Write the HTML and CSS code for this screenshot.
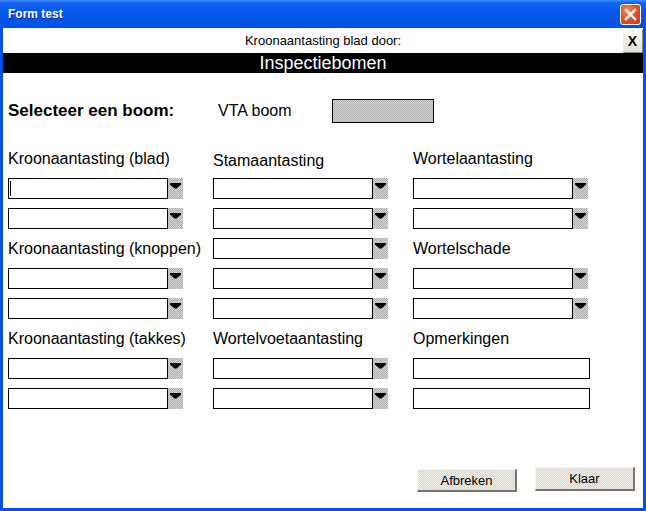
FILE: index.html
```html
<!DOCTYPE html>
<html lang="nl">
<head>
    <meta charset="UTF-8">
    <title>Form test</title>
    <link rel="stylesheet" href="styles.css">
</head>
<body>
    <div class="window">
        <div class="titlebar">
            <span class="title">Form test</span>
            <span class="close-btn">
                <svg width="13" height="13" viewBox="0 0 13 13"><path d="M2 2 L11 11 M11 2 L2 11" stroke="#fff" stroke-width="2.4" stroke-linecap="square"/></svg>
            </span>
        </div>

        <div class="client">
            <div class="subhead">
                <span></span>
                <span class="subhead-text">Kroonaantasting blad door:</span>
                <span class="small-x">X</span>
            </div>
            <div class="banner">Inspectiebomen</div>

            <div class="picker">
                <span class="picker-label">Selecteer een boom:</span>
                <span class="picker-vta">VTA boom</span>
                <span class="picker-box"></span>
            </div>

            <div class="fields">
                <div class="label">Kroonaantasting (blad)</div>
                <div class="label label-low">Stamaantasting</div>
                <div class="label">Wortelaantasting</div>

                <div class="combo"><div class="combo-input"><span class="caret"></span></div><div class="combo-btn"></div></div>
                <div class="combo"><div class="combo-input"></div><div class="combo-btn"></div></div>
                <div class="combo"><div class="combo-input"></div><div class="combo-btn"></div></div>

                <div class="combo"><div class="combo-input"></div><div class="combo-btn"></div></div>
                <div class="combo"><div class="combo-input"></div><div class="combo-btn"></div></div>
                <div class="combo"><div class="combo-input"></div><div class="combo-btn"></div></div>

                <div class="label">Kroonaantasting (knoppen)</div>
                <div class="combo"><div class="combo-input"></div><div class="combo-btn"></div></div>
                <div class="label">Wortelschade</div>

                <div class="combo"><div class="combo-input"></div><div class="combo-btn"></div></div>
                <div class="combo"><div class="combo-input"></div><div class="combo-btn"></div></div>
                <div class="combo"><div class="combo-input"></div><div class="combo-btn"></div></div>

                <div class="combo"><div class="combo-input"></div><div class="combo-btn"></div></div>
                <div class="combo"><div class="combo-input"></div><div class="combo-btn"></div></div>
                <div class="combo"><div class="combo-input"></div><div class="combo-btn"></div></div>

                <div class="label">Kroonaantasting (takkes)</div>
                <div class="label">Wortelvoetaantasting</div>
                <div class="label">Opmerkingen</div>

                <div class="combo"><div class="combo-input"></div><div class="combo-btn"></div></div>
                <div class="combo"><div class="combo-input"></div><div class="combo-btn"></div></div>
                <div class="textbox"></div>

                <div class="combo"><div class="combo-input"></div><div class="combo-btn"></div></div>
                <div class="combo"><div class="combo-input"></div><div class="combo-btn"></div></div>
                <div class="textbox"></div>
            </div>

            <div class="actions">
                <span class="btn btn-low">Afbreken</span>
                <span class="btn">Klaar</span>
            </div>
        </div>
    </div>
</body>
</html>
```

FILE: styles.css
```css
body {
    margin: 0;
    font-family: "Liberation Sans", Arial, sans-serif;
    background: #fff;
}
.window {
    width: 646px;
    height: 511px;
    display: flex;
    flex-direction: column;
    background: #0a4fe0;
}
.titlebar {
    height: 28px;
    display: flex;
    align-items: center;
    justify-content: space-between;
    padding: 0 5px 0 8px;
    background: linear-gradient(#3d8cff 0, #1462f0 3px, #0758ea 40%, #0052e2 100%);
}
.title {
    color: #fff;
    font-weight: bold;
    font-size: 12px;
    text-shadow: 1px 1px #0b2a9a;
}
.close-btn {
    width: 19px;
    height: 19px;
    margin-top: 1px;
    border: 1px solid #fff;
    border-radius: 3px;
    background: radial-gradient(circle at 35% 30%, #f08c70 0, #e0532f 45%, #c23a18 100%);
    display: flex;
    align-items: center;
    justify-content: center;
}
.client {
    flex: 1;
    margin: 0 3px 3px;
    background: #fff;
    display: flex;
    flex-direction: column;
}
.subhead {
    height: 25px;
    display: grid;
    grid-template-columns: 20px 1fr 20px;
    align-items: center;
}
.subhead-text {
    text-align: center;
    font-size: 13px;
    color: #000;
}
.small-x {
    height: 23px;
    margin-top: 1px;
    box-sizing: border-box;
    border-right: 1px solid #8a8678;
    border-bottom: 1px solid #8a8678;
    background: linear-gradient(#fbfaf6, #e3e0d4);
    font-weight: bold;
    font-size: 14px;
    line-height: 22px;
    text-align: center;
}
.banner {
    height: 20px;
    background: #000;
    color: #fff;
    font-size: 18px;
    line-height: 20px;
    text-align: center;
}
.picker {
    display: flex;
    align-items: center;
    margin-top: 26px;
    padding-left: 5px;
    height: 24px;
}
.picker-label {
    width: 210px;
    font-weight: bold;
    font-size: 17px;
}
.picker-vta {
    width: 114px;
    font-size: 16px;
}
.picker-box {
    width: 102px;
    height: 24px;
    box-sizing: border-box;
    border: 1px solid #000;
    background-color: #c4c4c4;
    background-image: repeating-conic-gradient(#b0b0b0 0 25%, #d4d4d4 0 50%);
    background-size: 2px 2px;
}
.fields {
    display: grid;
    grid-template-columns: 205px 200px 177px;
    grid-auto-rows: 21px;
    row-gap: 9px;
    margin-top: 25px;
    padding-left: 5px;
}
.label {
    font-size: 16px;
    line-height: 21px;
    white-space: nowrap;
}
.label-low {
    padding-top: 2px;
}
.combo {
    display: flex;
}
.combo-input {
    width: 160px;
    height: 21px;
    box-sizing: border-box;
    border: 1px solid #000;
    background: #fff;
    padding: 2px 1px;
}
.caret {
    display: block;
    width: 1px;
    height: 15px;
    background: #000;
}
.combo-btn {
    width: 15px;
    height: 21px;
    background-color: #c0c0c0;
    background-image:
        url("data:image/svg+xml,%3Csvg xmlns='http://www.w3.org/2000/svg' width='11' height='6'%3E%3Cpath d='M0 0H11V1.5L6.5 5.5H4.5L0 1.5Z' fill='%23000'/%3E%3C/svg%3E"),
        repeating-conic-gradient(#b0b0b0 0 25%, #d4d4d4 0 50%);
    background-size: 11px 6px, 2px 2px;
    background-position: 2px 5px, 0 0;
    background-repeat: no-repeat, repeat;
}
.textbox {
    width: 177px;
    height: 21px;
    box-sizing: border-box;
    border: 1px solid #000;
}
.actions {
    margin-top: auto;
    display: flex;
    align-items: flex-start;
    justify-content: flex-end;
    gap: 18px;
    padding: 0 8px 16px 0;
}
.btn {
    width: 100px;
    height: 24px;
    box-sizing: border-box;
    border-top: 1px solid #f6f4ee;
    border-left: 1px solid #f6f4ee;
    border-right: 2px solid #76746c;
    border-bottom: 2px solid #76746c;
    background-color: #e6e4da;
    background-image: repeating-conic-gradient(#d8d5ca 0 25%, #f2f0e8 0 50%);
    background-size: 2px 2px;
    font-size: 13px;
    line-height: 21px;
    text-align: center;
}
.btn-low {
    margin-top: 2px;
    height: 23px;
}
```
